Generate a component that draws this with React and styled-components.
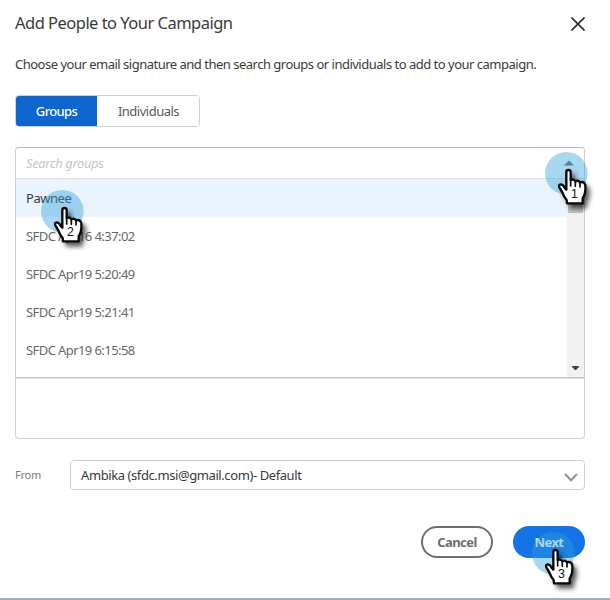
import React from "react";
import styled, { createGlobalStyle, css } from "styled-components";

const GlobalStyle = createGlobalStyle`
  *, *::before, *::after { box-sizing: border-box; }
  body { margin: 0; background: #fff; font-family: "Noto Sans", "Open Sans", sans-serif; }
  button { font-family: inherit; margin: 0; padding: 0; }
`;

const Dialog = styled.main`
  position: relative;
  display: flex;
  flex-direction: column;
  width: 610px;
  height: 600px;
  padding: 10px 25px 0 15px;
  overflow: hidden;
  color: #3a3a3a;
  background: #fff;
  border-bottom: 2px solid #a0aebf;
`;

const Header = styled.header`
  display: flex;
  justify-content: space-between;
  align-items: center;
  height: 26px;
`;

const Title = styled.h1`
  margin: 0;
  font-size: 16.5px;
  font-weight: 400;
  line-height: 26px;
  letter-spacing: -0.52px;
  white-space: nowrap;
`;

const CloseButton = styled.button`
  display: flex;
  width: 14px;
  height: 14px;
  margin-top: 2px;
  border: 0;
  background: none;
`;

const Description = styled.p`
  margin: 18px 0 0;
  height: 20px;
  font-size: 13px;
  line-height: 20px;
  letter-spacing: -0.5px;
  white-space: nowrap;
`;

const Tabs = styled.div`
  display: flex;
  width: 185px;
  height: 32px;
  margin-top: 21px;
  border: 1px solid #d0d0d0;
  border-radius: 4px;
  overflow: hidden;
`;

const Tab = styled.button`
  flex: ${(p) => (p.$active ? "0 0 81px" : "1")};
  border: 0;
  padding-left: ${(p) => (p.$active ? "0" : "1px")};
  font-size: 13px;
  line-height: 30px;
  letter-spacing: ${(p) => (p.$active ? "-0.65px" : "-0.5px")};
  font-weight: ${(p) => (p.$active ? 500 : 400)};
  color: ${(p) => (p.$active ? "#fff" : "#585858")};
  background: ${(p) => (p.$active ? "#0d66d0" : "#fff")};
`;

const GroupBox = styled.section`
  width: 570px;
  height: 292px;
  margin-top: 20px;
  border: 1px solid #cfcfcf;
  border-top-color: #b8b8b8;
  border-radius: 4px;
`;

const SearchRow = styled.div`
  display: flex;
  align-items: center;
  justify-content: space-between;
  height: 31px;
  padding: 0 10px 1px;
  border-bottom: 1px solid #e1e1e1;
  font-size: 13px;
  font-style: italic;
  letter-spacing: -0.4px;
  line-height: 20px;
  color: #c6c6c6;
`;

const Menu = styled.div`
  display: flex;
  height: 199px;
  border-bottom: 1px solid #c3c3c3;
  box-shadow: 0 1px 1px rgba(0, 0, 0, 0.12);
`;

const Options = styled.ul`
  flex: 1;
  margin: 0;
  padding: 0;
  list-style: none;
`;

const Option = styled.li`
  height: 38px;
  padding-left: 10px;
  font-size: 13px;
  line-height: 38px;
  letter-spacing: ${(p) => (p.$selected ? "-0.45px" : "-0.58px")};
  color: ${(p) => (p.$selected ? "#3a3a3a" : "#686868")};
  background: ${(p) => (p.$selected ? "#e9f4fe" : "transparent")};
`;

const ScrollTrack = styled.div`
  display: flex;
  flex-direction: column;
  justify-content: space-between;
  align-items: center;
  width: 17px;
  padding: 17px 1px 7px;
  background: #f1f1f1;
`;

const ScrollThumb = styled.div`
  width: 15px;
  height: 17px;
  background: #c1c1c1;
`;

const SenderRow = styled.div`
  display: flex;
  align-items: center;
  width: 570px;
  height: 30px;
  margin-top: 21px;
`;

const Label = styled.span`
  width: 55px;
  padding-bottom: 1px;
  font-size: 11px;
  letter-spacing: -0.25px;
  color: #7c7c7c;
`;

const Select = styled.div`
  display: flex;
  flex: 1;
  align-items: center;
  justify-content: space-between;
  height: 30px;
  padding: 0 6px 0 10px;
  border: 1px solid #cfcfcf;
  border-radius: 4px;
  font-size: 13px;
  letter-spacing: -0.41px;
  white-space: nowrap;
`;

const Chevron = styled.svg`
  margin-top: 4px;
`;

const Footer = styled.footer`
  display: flex;
  justify-content: flex-end;
  gap: 20px;
  margin-top: 36px;
`;

const Button = styled.button`
  width: 72px;
  height: 32px;
  border-radius: 16px;
  font-size: 13px;
  font-weight: 700;
  letter-spacing: -0.6px;
  ${(p) =>
    p.$primary
      ? css`
          border: 0;
          color: #fff;
          background: #1473e6;
        `
      : css`
          border: 2px solid #6e6e6e;
          color: #6e6e6e;
          background: #fff;
        `}
`;

const Callout = styled.svg`
  position: absolute;
  left: ${(p) => p.$x}px;
  top: ${(p) => p.$y}px;
  width: 60px;
  height: 70px;
  pointer-events: none;
`;

const HAND =
  "M64 60 Q64 54 70 54 Q77 54 77 60 L77 84 Q86 80 91 88 Q100 83 105 91 Q117 87 121 99 Q122 112 120 122 Q118 131 113 139 L113 154 L66 154 L65 144 Q57 135 52 121 L43 106 Q40 98 47 97 Q54 97 59 107 L64 113 Z";

// A numbered pointer over a translucent highlight; viewBox units are thirds of a pixel.
function Step({ number, x, y }) {
  return (
    <Callout $x={x} $y={y} viewBox="0 0 180 210">
      <defs>
        <filter id={`shadow-${number}`} x="-30%" y="-30%" width="180%" height="180%">
          <feGaussianBlur stdDeviation="8" />
        </filter>
      </defs>
      <circle cx="64" cy="64" r="64" fill="#309fdc" fillOpacity=".42" />
      <path d={HAND} transform="translate(11 13)" fill="#000" fillOpacity=".65" stroke="#000" strokeOpacity=".4" strokeWidth="6" filter={`url(#shadow-${number})`} />
      <path d={HAND} fill="#fff" stroke="#080808" strokeWidth="7" strokeLinejoin="round" />
      <path d="M77 82V102M91 88V103M105 92V105" fill="none" stroke="#080808" strokeWidth="5" strokeLinecap="round" />
      <text x="88" y="139" textAnchor="middle" fontFamily="Liberation Sans, sans-serif" fontSize="37" fill="#111">
        {number}
      </text>
    </Callout>
  );
}

const groups = [
  "Pawnee",
  "SFDC Apr16 4:37:02",
  "SFDC Apr19 5:20:49",
  "SFDC Apr19 5:21:41",
  "SFDC Apr19 6:15:58",
];

export default function App() {
  return (
    <>
      <GlobalStyle />
      <Dialog>
        <Header>
          <Title>Add People to Your Campaign</Title>
          <CloseButton aria-label="Close">
            <svg width="14" height="14" viewBox="0 0 14 14">
              <path d="M.5.5 13.5 13.5M13.5.5.5 13.5" stroke="#292929" strokeWidth="1.6" />
            </svg>
          </CloseButton>
        </Header>
        <Description>
          Choose your email signature and then search groups or individuals to add to your campaign.
        </Description>
        <Tabs>
          <Tab $active>Groups</Tab>
          <Tab>Individuals</Tab>
        </Tabs>
        <GroupBox>
          <SearchRow>
            Search groups
            <svg width="10" height="6" viewBox="0 0 10 6">
              <path d="M0 5.5 5 .5 10 5.5Z" fill="#6e6e6e" />
            </svg>
          </SearchRow>
          <Menu>
            <Options>
              {groups.map((name, i) => (
                <Option key={name} $selected={i === 0}>
                  {name}
                </Option>
              ))}
            </Options>
            <ScrollTrack>
              <ScrollThumb />
              <svg width="7" height="4" viewBox="0 0 7 4">
                <path d="M0 0H7V1L4 4H3L0 1Z" fill="#444" />
              </svg>
            </ScrollTrack>
          </Menu>
        </GroupBox>
        <SenderRow>
          <Label>From</Label>
          <Select>
            Ambika (sfdc.msi@gmail.com)- Default
            <Chevron width="14" height="9" viewBox="0 0 14 9">
              <path d="M1 1 7 7.3 13 1" fill="none" stroke="#919191" strokeWidth="2" />
            </Chevron>
          </Select>
        </SenderRow>
        <Footer>
          <Button>Cancel</Button>
          <Button $primary>Next</Button>
        </Footer>
        <Step number={1} x={545} y={152} />
        <Step number={2} x={41} y={190} />
        <Step number={3} x={532} y={532} />
      </Dialog>
    </>
  );
}
